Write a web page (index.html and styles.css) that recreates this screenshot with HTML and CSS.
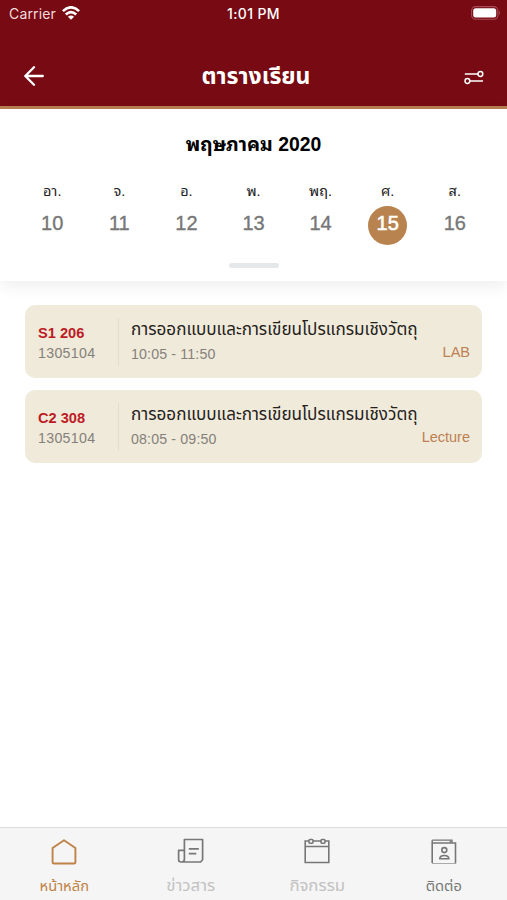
FILE: index.html
```html
<!DOCTYPE html>
<html lang="th">
<head>
<meta charset="utf-8">
<title>ตารางเรียน</title>
<link rel="stylesheet" href="styles.css">
</head>
<body>
<div class="app">
  <header class="header">
    <div class="status">
      <div class="carrier"><span class="carrier-name">Carrier</span>
        <svg class="wifi" width="18" height="14" viewBox="0 0 18 14" fill="none" stroke="#fff" stroke-width="2.6"><path d="M.9 5.1Q9-2.5 17.1 5.1M3.8 8.5Q9 3.7 14.2 8.5"/><path d="M9 13.8 5.9 10.8Q9 8.3 12.1 10.8Z" fill="#fff" stroke="none"/></svg>
      </div>
      <div class="clock">1:01 PM</div>
      <svg class="battery" width="30" height="14" viewBox="0 0 30 14"><rect x=".6" y=".6" width="26.3" height="12.6" rx="4" fill="none" stroke="#a64e57" stroke-width="1.1"/><rect x="2.2" y="2.2" width="23" height="9.4" rx="2.5" fill="#fff"/><path d="M28 4.8q2 2.1 0 4.2z" fill="#a64e57"/></svg>
    </div>
    <div class="titlebar">
      <svg class="back" width="20" height="20" viewBox="0 0 20 20" fill="none" stroke="#fff" stroke-width="2.3" stroke-linecap="round" stroke-linejoin="round"><path d="M18.8 10H1.3M10 1.2 1.3 10l8.7 8.7"/></svg>
      <h1 class="title">ตารางเรียน</h1>
      <svg class="filter" width="20" height="15" viewBox="0 0 20 15" fill="none" stroke="#fff" stroke-width="1.5"><path d="M.8 4H14M6 11h13"/><circle cx="16.4" cy="4" r="2.4"/><circle cx="3.4" cy="11" r="2.4"/></svg>
    </div>
  </header>
  <section class="calendar">
    <h2 class="month">พฤษภาคม 2020</h2>
    <div class="week">
      <div class="day"><span class="name">อา.</span><span class="date">10</span></div>
      <div class="day"><span class="name">จ.</span><span class="date">11</span></div>
      <div class="day"><span class="name">อ.</span><span class="date">12</span></div>
      <div class="day"><span class="name">พ.</span><span class="date">13</span></div>
      <div class="day"><span class="name">พฤ.</span><span class="date">14</span></div>
      <div class="day"><span class="name">ศ.</span><span class="date selected">15</span></div>
      <div class="day"><span class="name">ส.</span><span class="date">16</span></div>
    </div>
    <div class="handle"></div>
  </section>
  <main class="classes">
    <article class="card">
      <div class="room"><b class="room-name">S1 206</b><span class="code">1305104</span></div>
      <div class="info"><h3 class="subject">การออกแบบและการเขียนโปรแกรมเชิงวัตถุ</h3>
        <div class="meta"><span class="time">10:05 - 11:50</span><span class="kind">LAB</span></div></div>
    </article>
    <article class="card">
      <div class="room"><b class="room-name">C2 308</b><span class="code">1305104</span></div>
      <div class="info"><h3 class="subject">การออกแบบและการเขียนโปรแกรมเชิงวัตถุ</h3>
        <div class="meta"><span class="time">08:05 - 09:50</span><span class="kind">Lecture</span></div></div>
    </article>
  </main>
  <nav class="tabs">
    <a class="tab active"><svg width="28" height="28" viewBox="0 0 28 28" fill="none" stroke="currentColor" stroke-width="1.9" stroke-linejoin="round"><path d="M2.6 10 14 2.3 25.4 10v14.2q0 1.3-1.3 1.3H3.9q-1.3 0-1.3-1.3z"/></svg><span class="label">หน้าหลัก</span></a>
    <a class="tab dim"><svg width="28" height="28" viewBox="0 0 28 28" fill="none" stroke="#777" stroke-width="1.7" stroke-linejoin="round"><path d="M7.4 1.5h18.2v20.3l-2 2.2H4q-2.4 0-2.4-2.4v-9.2h5.8zM7.4 12v9q0 3-2.4 3M11.8 10.8h10M11.8 15.6h7.5"/></svg><span class="label">ข่าวสาร</span></a>
    <a class="tab dim"><svg width="28" height="28" viewBox="0 0 28 28" fill="none" stroke="#777" stroke-width="1.6"><path d="M5.8 3H2.2v21.5h23.6V3h-3.6M10 3h8M2.2 8.5h23.6"/><rect x="6" y="1.5" width="4" height="3.7" rx="1"/><rect x="18" y="1.5" width="4" height="3.7" rx="1"/></svg><span class="label">กิจกรรม</span></a>
    <a class="tab"><svg width="28" height="28" viewBox="0 0 28 28" fill="none" stroke="#777" stroke-width="1.6"><path d="M2.2 25V2.2"/><path d="M2.2 2.2H22v2.7" stroke-width="1.3"/><path d="M3 5h22.5v20.5M20.5 5V2.5"/><path d="M2 25.5h24" stroke="#aaa" stroke-width="1"/><circle cx="14.3" cy="12.1" r="2.5"/><path d="M9.8 20.8q0-3.3 4.5-3.3t4.5 3.3z"/></svg><span class="label">ติดต่อ</span></a>
  </nav>
</div>
</body>
</html>
```
FILE: styles.css
```css
* { box-sizing: border-box; }
body { margin: 0; background: #fff; font-family: "Liberation Sans", "Noto Sans Thai", sans-serif; }
h1, h2, h3 { margin: 0; }
svg { display: block; flex: none; }
.app { width: 507px; height: 900px; display: flex; flex-direction: column; overflow: hidden; }
.header { height: 109px; flex: none; background: #770a12; border-bottom: 3px solid #b87d54; color: #fff; }
.status { height: 28px; display: grid; grid-template-columns: 1fr auto 1fr; align-items: center; padding: 0 6px 0 9px; font-family: Inter, sans-serif; }
.carrier { display: flex; align-items: center; gap: 6px; font-size: 14px; letter-spacing: .15px; color: #f3dcdd; }
.carrier-name { margin-top: -1px; }
.wifi { margin-top: -2px; }
.clock { font-size: 14px; font-weight: 500; letter-spacing: .35px; margin-left: -3px; margin-top: -1px; }
.battery { justify-self: end; margin-top: -2px; }
.titlebar { height: 77px; display: grid; grid-template-columns: 1fr auto 1fr; align-items: center; padding: 19px 23px 0 24px; }
.title { font-size: 23px; line-height: 32px; font-weight: 700; margin-left: 4px; }
.filter { justify-self: end; margin-top: 2px; }
.calendar { height: 172px; flex: none; padding: 20px 18px 0; display: flex; flex-direction: column; align-items: center; box-shadow: 0 5px 16px rgba(0,0,0,.07); }
.month { font-family: "Liberation Sans", "Noto Sans Thai Looped", Loma, Garuda, Waree, "Noto Sans Thai", sans-serif; font-size: 19.4px; line-height: 30px; font-weight: 700; white-space: nowrap; }
.week { display: grid; grid-template-columns: repeat(7, 67.1px); margin-top: 20px; }
.day { display: flex; flex-direction: column; align-items: center; }
.name { font-family: "Liberation Sans", "Noto Sans Thai Looped", Loma, Garuda, Waree, "Noto Sans Thai", sans-serif; font-size: 14.5px; line-height: 24px; height: 24px; color: #222; }
.date { width: 39px; height: 39px; margin-top: 3px; line-height: 35px; text-align: center; font-size: 20px; color: #777; -webkit-text-stroke: .35px currentColor; }
.selected { background: #b98350; border-radius: 50%; color: #fff; -webkit-text-stroke-width: .6px; }
.handle { width: 50px; height: 5px; margin-top: 18px; border-radius: 3px; background: #e5e8e9; }
.classes { flex: 1; padding: 24px 25px 0; display: flex; flex-direction: column; gap: 12px; }
.card { height: 73px; display: flex; align-items: center; background: #f0eada; border-radius: 10px; padding: 0 12px; }
.room { width: 82px; height: 48px; flex: none; border-right: 1px solid #e2ddcf; display: flex; flex-direction: column; padding: 5px 0 0 1px; }
.room-name { font-size: 14.6px; line-height: 20px; color: #bd1c25; }
.code { font-size: 14.2px; line-height: 21px; letter-spacing: .3px; color: #85817a; }
.info { flex: 1; min-width: 0; height: 73px; padding: 10px 0 0 12px; }
.subject { font-size: 17.1px; line-height: 30px; height: 29px; font-weight: 400; color: #24211b; white-space: nowrap; }
.meta { display: flex; justify-content: space-between; font-size: 14.2px; line-height: 20px; color: #85817a; }
.time { letter-spacing: .15px; }
.kind { color: #bd8052; margin-top: -2px; font-size: 14.5px; }
.tabs { height: 73px; flex: none; display: grid; grid-template-columns: repeat(4, 1fr); background: #f5f5f5; border-top: 1px solid #dedede; padding-left: 1px; }
.tab { display: flex; flex-direction: column; align-items: center; padding-top: 10px; color: #777; font-size: 14.7px; }
.active { color: #bf8247; }
.dim { color: #c2c2c2; font-size: 16.8px; }
.label { line-height: 22px; margin-top: 9px; white-space: nowrap; }
```
